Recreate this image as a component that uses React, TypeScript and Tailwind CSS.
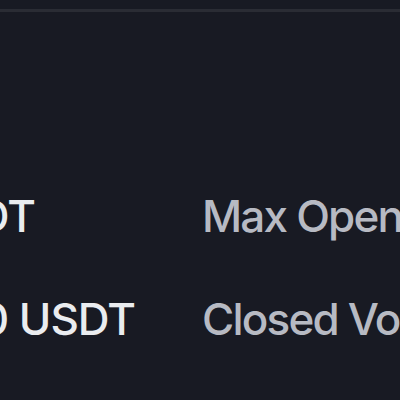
export default function App() {
  const rows = [
    { value: "1,000 USDT", label: "Max Open Position", w: "w-[35px]" },
    { value: "0 USDT", label: "Closed Volume", w: "w-[135px]" },
  ];
  return (
    <div className="w-[400px] h-[400px] overflow-hidden bg-[#181a23] font-['Inter',sans-serif]">
      <div className="pt-[9px]">
        <div className="h-[3px] bg-[#2a2c34]" />
      </div>
      <div className="flex flex-col pt-[178px] gap-[51px]">
        {rows.map((r) => (
          <div
            key={r.label}
            className="flex items-center h-[52px] whitespace-nowrap text-[44px] leading-none font-medium tracking-[-1px]"
          >
            <div className={`${r.w} shrink-0 flex justify-end text-[#eaecef]`}>
              <span>{r.value}</span>
            </div>
            <div className="ml-auto w-[198px] shrink-0 text-[#b7bac3] tracking-[-1.8px]">{r.label}</div>
          </div>
        ))}
      </div>
    </div>
  );
}
